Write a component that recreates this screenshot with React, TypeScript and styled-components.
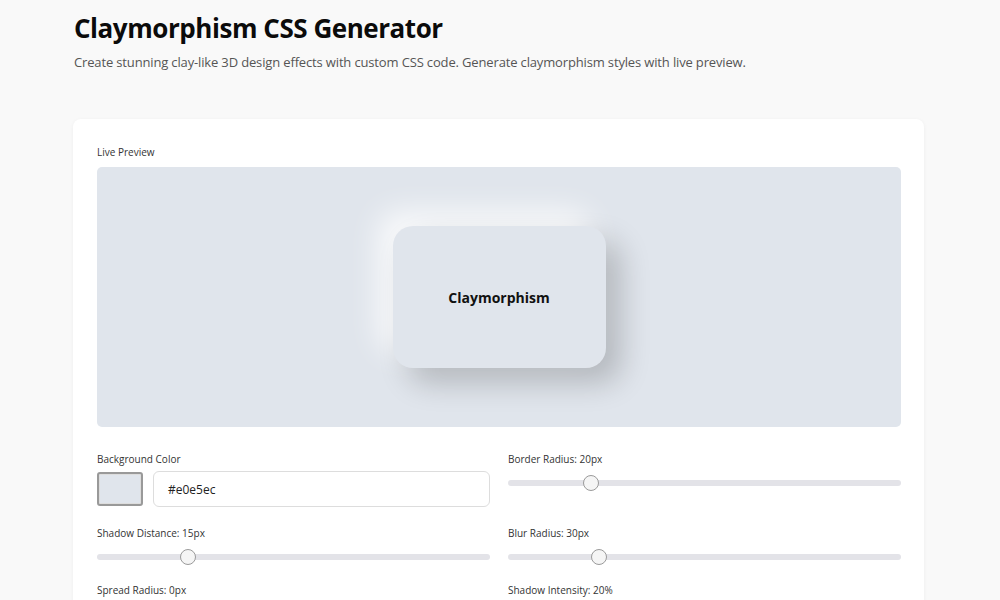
import styled, { createGlobalStyle } from 'styled-components';

const GlobalStyle = createGlobalStyle`
	body {
		margin: 0;
		background: #f9f9f9;
		font-family: 'Open Sans', 'Noto Sans', sans-serif;
		color: #111;
	}
`;

const Page = styled.div`
	padding: 10px 76px 0 73px;
`;

const Title = styled.h1`
	margin: 0 0 0 1px;
	font-size: 26px;
	font-weight: 700;
	line-height: 36px;
	letter-spacing: -0.45px;
	color: #0b0b0b;
`;

const Subtitle = styled.p`
	margin: 6px 0 0 1px;
	font-size: 13px;
	line-height: 20px;
	letter-spacing: -0.15px;
	color: #555;
`;

const Card = styled.section`
	margin-top: 47px;
	background: #fff;
	border-radius: 8px;
	box-shadow: 0 1px 4px rgba(0, 0, 0, 0.05);
	padding: 26px 23px 40px 24px;
`;

const Label = styled.div`
	font-size: 10px;
	line-height: 14px;
	color: #333;
	margin-bottom: 8px;
`;

const Preview = styled.div`
	height: 260px;
	background: #e0e5ec;
	border-radius: 5px;
	display: flex;
	align-items: center;
	justify-content: center;
	margin-bottom: 25px;
`;

const ClayBox = styled.div`
	width: 213px;
	height: 142px;
	background: #e0e5ec;
	border-radius: 20px;
	display: flex;
	align-items: center;
	justify-content: center;
	font-size: 14px;
	font-weight: 700;
	color: #111;
	box-shadow: 15px 15px 30px rgba(0, 0, 0, 0.2),
		-15px -15px 30px rgba(255, 255, 255, 0.8);
`;

const Controls = styled.div`
	display: grid;
	grid-template-columns: 1fr 1fr;
	column-gap: 18px;
	row-gap: 16px;
`;

const Field = styled.div`
	display: flex;
	flex-direction: column;
`;

const ColorRow = styled.div`
	display: flex;
	gap: 10px;
	margin: -3px 0 3px;
`;

const Swatch = styled.div<{ $color: string }>`
	width: 46px;
	height: 34px;
	box-sizing: border-box;
	border: 2px solid #999;
	border-radius: 3px;
	background: ${({ $color }) => $color};
	box-shadow: inset 0 0 0 1px #ddd;
	margin-top: 1px;
`;

const HexInput = styled.div`
	flex: 1;
	height: 36px;
	box-sizing: border-box;
	border: 1px solid #ddd;
	border-radius: 6px;
	padding: 0 14px;
	display: flex;
	align-items: center;
	font-size: 12px;
	color: #222;
`;

const SliderTrack = styled.div`
	position: relative;
	height: 6px;
	margin: 6px 0 7px;
	border-radius: 3px;
	background: #e3e3e8;
`;

const Thumb = styled.div`
	position: absolute;
	top: 50%;
	width: 14px;
	height: 14px;
	margin: -8px 0 0 -8px;
	border-radius: 50%;
	background: #f5f5f5;
	border: 1px solid #9a9a9a;
`;

interface SliderProps {
	label: string;
	value: number;
	min: number;
	max: number;
	unit: string;
}

const Slider = ({ label, value, min, max, unit }: SliderProps) => {
	const pct = ((value - min) / (max - min)) * 100;
	return (
		<Field>
			<Label>
				{label}: {value}
				{unit}
			</Label>
			<SliderTrack>
				<Thumb style={{ left: `${pct}%` }} />
			</SliderTrack>
		</Field>
	);
};

const App = () => {
	const bg = '#e0e5ec';
	return (
		<Page>
			<GlobalStyle />
			<Title>Claymorphism CSS Generator</Title>
			<Subtitle>
				Create stunning clay-like 3D design effects with custom CSS code. Generate claymorphism
				styles with live preview.
			</Subtitle>
			<Card>
				<Label>Live Preview</Label>
				<Preview>
					<ClayBox>Claymorphism</ClayBox>
				</Preview>
				<Controls>
					<Field>
						<Label>Background Color</Label>
						<ColorRow>
							<Swatch $color={bg} />
							<HexInput>{bg}</HexInput>
						</ColorRow>
					</Field>
					<Slider label="Border Radius" value={20} min={0} max={95} unit="px" />
					<Slider label="Shadow Distance" value={15} min={0} max={65} unit="px" />
					<Slider label="Blur Radius" value={30} min={0} max={130} unit="px" />
					<Slider label="Spread Radius" value={0} min={0} max={50} unit="px" />
					<Slider label="Shadow Intensity" value={20} min={0} max={100} unit="%" />
				</Controls>
			</Card>
		</Page>
	);
};

export default App;
